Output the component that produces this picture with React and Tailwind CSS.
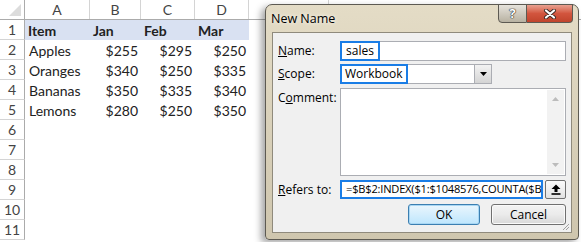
import React from 'react'

const cols = [
  { key: 'A', w: 'w-[65px]' },
  { key: 'B', w: 'w-[51px]' },
  { key: 'C', w: 'w-[54px]' },
  { key: 'D', w: 'w-[54px]' },
  { key: '', w: 'w-[80px]' },
]

const rows = [
  ['Item', 'Jan', 'Feb', 'Mar'],
  ['Apples', '$255', '$295', '$250'],
  ['Oranges', '$340', '$250', '$335'],
  ['Bananas', '$350', '$335', '$340'],
  ['Lemons', '$280', '$250', '$350'],
]

const Sheet = () => {
  const allRows = Array.from({ length: 11 }, (_, i) => i + 1)
  return (
    <div className="font-['Lato','Liberation_Sans',sans-serif] text-[14px] text-[#222]">
      {/* en-têtes de colonnes */}
      <div className="flex h-[20px] border-b border-[#ababab]">
        <div className="relative w-[25px] border-r border-[#ababab]">
          <svg className="absolute right-[3px] bottom-[3px]" width="12" height="12" viewBox="0 0 12 12">
            <path d="M12 0 L12 12 L0 12 Z" fill="#dcdcdc" />
          </svg>
        </div>
        {cols.map((c, i) => (
          <div
            key={i}
            className={`${c.w} flex items-center justify-center border-r border-[#d4d4d4] text-[#444]`}
          >
            {c.key}
          </div>
        ))}
      </div>
      {allRows.map((r) => {
        const data = rows[r - 1]
        const header = r === 1
        return (
          <div key={r} className="flex h-[20px]">
            <div className="w-[25px] flex items-center justify-center border-r border-b border-r-[#ababab] border-b-[#d4d4d4] text-[#444]">
              {r}
            </div>
            {data &&
              data.map((v, i) => (
                <div
                  key={i}
                  className={`${cols[i].w} flex items-center ${
                    header ? 'bg-[#d9e1f2] font-bold pl-[3px]' : i === 0 ? 'pl-[4px]' : 'justify-end pr-[3px]'
                  }`}
                >
                  {v}
                </div>
              ))}
          </div>
        )
      })}
    </div>
  )
}

const Field = ({ children, className = '' }) => (
  <div className={`h-[20px] border border-[#abadb3] bg-white flex items-stretch ${className}`}>
    {children}
  </div>
)

const NewNameDialog = () => (
  <div className="absolute left-[265px] top-[4px] w-[314px] h-[236px] rounded-t-[7px] rounded-b-[4px] border border-[#5d5a52] bg-gradient-to-b from-[#e4dcc6] to-[#cfc6ae] px-[6px] pb-[6px] shadow-[-4px_3px_7px_rgba(0,0,0,0.35)] font-['Open_Sans','Noto_Sans',sans-serif] text-[12px] text-black flex flex-col">
    {/* barre de titre */}
    <div className="flex items-start h-[27px]">
      <span className="mt-[5px] -ml-[1px] text-[12.5px] [text-shadow:0_0_4px_#fff]">New Name</span>
      <div className="ml-auto -mr-[1px] -mt-px flex">
        <div className="w-[29px] h-[19px] rounded-bl-[4px] border border-[#5d5a52] bg-gradient-to-b from-[#e6e3dc] to-[#b8b2a2] flex items-center justify-center">
          <span className="font-bold text-white text-[13px] leading-none [text-shadow:0_0_1px_#222,0_0_1px_#222,0_0_1px_#222]">?</span>
        </div>
        <div className="w-[46px] h-[19px] rounded-br-[4px] border border-l-0 border-[#5d5a52] bg-gradient-to-b from-[#e8a090] via-[#d2553e] to-[#c0442c] flex items-center justify-center">
          <svg width="14" height="10" viewBox="0 0 14 10">
            <path d="M3 1.5 L11 8.5 M11 1.5 L3 8.5" stroke="#3a2a26" strokeWidth="4" strokeLinecap="round" />
            <path d="M3 1.5 L11 8.5 M11 1.5 L3 8.5" stroke="#fff" strokeWidth="2.2" strokeLinecap="round" />
          </svg>
        </div>
      </div>
    </div>

    {/* zone client */}
    <div className="relative flex-1 border border-[#8f8a7c] bg-[#f0f0f0] pt-[8px] pl-[5px] pr-[5px] flex flex-col">
      <div className="flex items-center">
        <span className="w-[62px]">
          <u>N</u>ame:
        </span>
        <Field className="flex-1">
          <span className="-my-px -ml-px border-2 border-[#1a7de6] px-[4px] flex items-center">sales</span>
        </Field>
      </div>

      <div className="flex items-center mt-[3px]">
        <span className="w-[62px]">
          <u>S</u>cope:
        </span>
        <Field className="w-[152px]">
          <span className="-my-px -ml-px border-2 border-[#1a7de6] px-[3px] flex items-center">Workbook</span>
          <div className="ml-auto w-[17px] border-l border-[#abadb3] bg-gradient-to-b from-[#f2f2f2] to-[#d4d4d4] flex items-center justify-center">
            <svg width="7" height="4" viewBox="0 0 7 4">
              <path d="M0 0 L7 0 L3.5 4 Z" fill="#000" />
            </svg>
          </div>
        </Field>
      </div>

      <div className="flex items-start mt-[4px]">
        <span className="w-[62px] pt-[1px]">
          C<u>o</u>mment:
        </span>
        <div className="flex-1 h-[88px] border border-[#abadb3] bg-white flex justify-end">
          <div className="w-[17px] my-[1px] mr-[1px] bg-[#f2f2f2] flex flex-col items-center justify-between py-[7px]">
            <svg width="7" height="4" viewBox="0 0 7 4">
              <path d="M0 4 L7 4 L3.5 0 Z" fill="#bcbcbc" />
            </svg>
            <svg width="7" height="4" viewBox="0 0 7 4">
              <path d="M0 0 L7 0 L3.5 4 Z" fill="#bcbcbc" />
            </svg>
          </div>
        </div>
      </div>

      <div className="flex items-center mt-[4px]">
        <span className="w-[62px]">
          <u>R</u>efers to:
        </span>
        <div className="w-[203px] h-[19px] border-2 border-[#1a7de6] bg-white pl-[4px] flex items-center overflow-hidden whitespace-nowrap text-[11.1px] tracking-[-0.2px]">
          =$B$2:INDEX($1:$1048576,COUNTA($B
        </div>
        <div className="ml-auto w-[21px] h-[19px] rounded-[2px] border border-[#707070] bg-gradient-to-b from-[#fbfbfb] to-[#e2e2e2] flex items-center justify-center">
          <svg width="10" height="11" viewBox="0 0 10 11">
            <path d="M5 0.5 L9.5 5 L6.5 5 L6.5 8 L3.5 8 L3.5 5 L0.5 5 Z" fill="#000" />
            <rect x="0.5" y="9.2" width="9" height="1.6" fill="#000" />
          </svg>
        </div>
      </div>

      <div className="flex justify-end mt-[5px] gap-[11px]">
        <button className="w-[72px] h-[21px] rounded-[3px] border border-[#3c7fb1] bg-gradient-to-b from-[#eaf6fd] to-[#bee6fd] shadow-[inset_0_0_0_1px_#a8d7f4] text-[12px]">
          OK
        </button>
        <button className="w-[75px] h-[21px] rounded-[3px] border border-[#707070] bg-gradient-to-b from-[#f3f3f3] via-[#ebebeb] to-[#d8d8d8] shadow-[inset_0_0_0_1px_#fafafa] text-[12px]">
          Cancel
        </button>
      </div>

      {/* poignée de redimensionnement */}
      <svg className="absolute right-[1px] bottom-[1px]" width="10" height="10" viewBox="0 0 10 10">
        <path d="M9 3 L3 9 M9 6 L6 9" stroke="#a0a0a0" strokeWidth="1" />
      </svg>
    </div>
  </div>
)

const App = () => {
  return (
    <div className="relative w-[581px] h-[242px] overflow-hidden bg-white">
      <Sheet />
      <NewNameDialog />
    </div>
  )
}

export default App
